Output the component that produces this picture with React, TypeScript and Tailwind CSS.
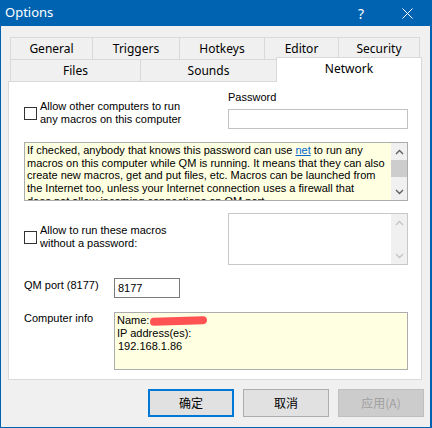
import type { ReactNode } from "react";

function Checkbox() {
  return <span className="block w-[13px] h-[13px] border border-[#333333] bg-white shrink-0" />;
}

function Chevron({ up, color }: { up?: boolean; color: string }) {
  return (
    <svg width="9" height="6" viewBox="0 0 9 6" fill="none">
      <path
        d={up ? "M1 5 L4.5 1.5 L8 5" : "M1 1 L4.5 4.5 L8 1"}
        stroke={color}
        strokeWidth="1.4"
      />
    </svg>
  );
}

function ScrollBar({ disabled }: { disabled?: boolean }) {
  const c = disabled ? "#c4c4c4" : "#606060";
  return (
    <div className="w-[16px] h-full bg-[#f0f0f0] flex flex-col shrink-0">
      <div className="h-[17px] flex items-center justify-center">
        <Chevron up color={c} />
      </div>
      {!disabled && <div className="h-[17px] bg-[#cdcdcd]" />}
      <div className="flex-1" />
      <div className="h-[17px] flex items-center justify-center">
        <Chevron color={c} />
      </div>
    </div>
  );
}

function Tab({ w, last, children }: { w: string; last?: boolean; children: ReactNode }) {
  return (
    <div
      className={`${w} h-[22px] border-t border-l ${last ? "border-r" : ""} border-[#d9d9d9] bg-[#f0f0f0] flex items-center justify-center`}
    >
      {children}
    </div>
  );
}

export default function App() {
  return (
    <div className="w-[432px] h-[428px] flex flex-col bg-[#f0f0f0] border-l border-r-2 border-b border-[#0063b1] font-['Noto_Sans','Noto_Sans_CJK_SC',sans-serif] text-[12px] text-black">
      {/* title bar */}
      <div className="h-[26px] bg-[#0063b1] flex items-center text-white shrink-0">
        <span className="pl-[4px] text-[13px] flex-1">Options</span>
        <div className="w-[46px] h-full flex items-center justify-center text-[14px]">?</div>
        <div className="w-[46px] h-full flex items-center justify-center">
          <svg width="11" height="11" viewBox="0 0 11 11">
            <path d="M0.5 0.5 L10.5 10.5 M10.5 0.5 L0.5 10.5" stroke="white" strokeWidth="1" />
          </svg>
        </div>
      </div>

      {/* tabs */}
      <div className="mt-[11px] ml-[9px] flex">
        <Tab w="w-[82px]">General</Tab>
        <Tab w="w-[87px]">Triggers</Tab>
        <Tab w="w-[85px]">Hotkeys</Tab>
        <Tab w="w-[74px]">Editor</Tab>
        <Tab w="w-[82px]" last>
          Security
        </Tab>
      </div>
      <div className="ml-[9px] flex h-[22px] items-start">
        <Tab w="w-[130px]">Files</Tab>
        <Tab w="w-[136px]">Sounds</Tab>
        <div className="relative z-10 w-[146px] h-[25px] -mt-[2px] border-t border-l border-r border-[#d9d9d9] bg-white flex justify-center pt-[2px]">
          Network
        </div>
      </div>

      {/* Network page */}
      <div className="ml-[7px] w-[414px] h-[299px] border border-[#d9d9d9] bg-white pl-[15px] pt-[9px] shrink-0 font-['Liberation_Sans',Arial,sans-serif] text-[11px]">
        <div className="flex h-[38px]">
          <div className="w-[204px] mt-[9px] flex items-center gap-[3px] self-start">
            <Checkbox />
            <div className="leading-[13px]">
              Allow other computers to run
              <br />
              any macros on this computer
            </div>
          </div>
          <div className="w-[180px]">
            <div className="leading-[13px]">Password</div>
            <div className="mt-[5px] h-[20px] border border-[#c2c2c2] bg-white" />
          </div>
        </div>

        <div className="mt-[13px] w-[384px] h-[59px] border border-[#acacac] bg-[#ffffe1] flex">
          <div className="flex-1 overflow-hidden pl-[2px] pt-[1px] leading-[12.7px] whitespace-nowrap">
            If checked, anybody that knows this password can use{" "}
            <span className="text-[#0066cc] underline">net</span> to run any
            <br />
            macros on this computer while QM is running. It means that they can also
            <br />
            create new macros, get and put files, etc. Macros can be launched from
            <br />
            the Internet too, unless your Internet connection uses a firewall that
            <br />
            does not allow incoming connections on QM port.
          </div>
          <ScrollBar />
        </div>

        <div className="mt-[12px] flex h-[52px]">
          <div className="w-[204px] mt-[11px] flex items-center gap-[3px] self-start">
            <Checkbox />
            <div className="leading-[13px]">
              Allow to run these macros
              <br />
              without a password:
            </div>
          </div>
          <div className="w-[180px] h-[52px] border border-[#c8c8c8] bg-white flex justify-end">
            <ScrollBar disabled />
          </div>
        </div>

        <div className="mt-[13px] flex h-[20px]">
          <div className="w-[90px] pt-[1px] leading-[13px]">QM port (8177)</div>
          <div className="w-[66px] h-[20px] border border-[#7a7a7a] pl-[3px] leading-[18px]">8177</div>
        </div>

        <div className="mt-[14px] flex">
          <div className="w-[90px] leading-[13px]">Computer info</div>
          <div className="w-[294px] h-[58px] border border-[#acacac] bg-[#ffffe1] pl-[2px] pt-[1px] leading-[13px]">
            <div className="flex items-center h-[13px]">
              Name:
              {/* marker stroke over the machine name */}
              <span className="relative ml-[1px] w-[57px] h-[8px] shrink-0">
                <span className="absolute right-[3px] -top-[1px] text-[#333333] text-[9px] leading-[9px]">04</span>
                <span className="absolute inset-0 bg-[#ff5252] rounded-[4px] -rotate-[2deg]" />
              </span>
            </div>
            <div>IP address(es):</div>
            <div className="pl-[1px]">192.168.1.86</div>
          </div>
        </div>
      </div>

      {/* dialog buttons */}
      <div className="mt-[9px] flex justify-end gap-[9px] pr-[6px] font-['Noto_Sans_CJK_SC','Noto_Sans',sans-serif]">
        <div className="w-[86px] h-[28px] border-2 border-[#0078d7] bg-[#e1e1e1] flex items-center justify-center">
          确定
        </div>
        <div className="w-[86px] h-[28px] border border-[#adadad] bg-[#e1e1e1] flex items-center justify-center">
          取消
        </div>
        <div className="w-[86px] h-[28px] border border-[#bfbfbf] bg-[#cccccc] text-[#a0a0a0] flex items-center justify-center">
          应用(A)
        </div>
      </div>
    </div>
  );
}
